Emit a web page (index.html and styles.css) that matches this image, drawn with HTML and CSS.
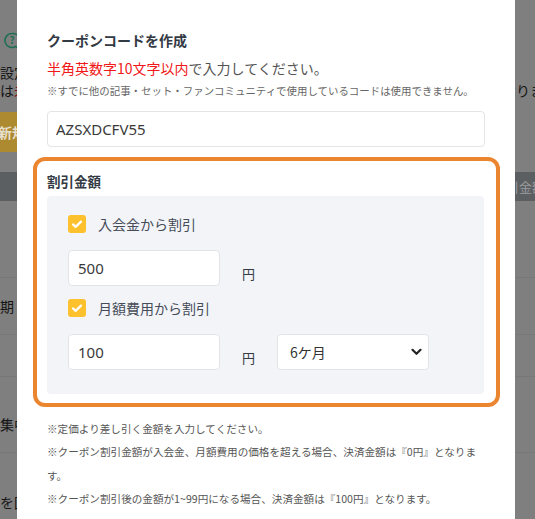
FILE: index.html
```html
<!DOCTYPE html>
<html lang="ja">
  <head>
    <meta charset="UTF-8" />
    <meta name="viewport" content="width=device-width, initial-scale=1.0" />
    <title>クーポンコードを作成</title>
    <link rel="stylesheet" href="styles.css">
  </head>

  <body>
    <!-- 背景のページ（モーダル表示中は暗くなる） -->
    <div class="page">
      <div class="pageHead">
        <svg class="helpIcon" width="18" height="19" viewBox="0 0 18 19">
          <path d="M9 1.5a7 7 0 1 0 3.6 13l3.6 2-1.1-3.6A7 7 0 0 0 9 1.5z" fill="none" stroke="#1f6f55" stroke-width="1.6" stroke-linejoin="round" />
          <text x="9" y="12.2" text-anchor="middle" font-size="10" font-weight="bold" fill="#1f6f55">?</text>
        </svg>
      </div>
      <p class="pageText">設定方法</p>
      <p class="pageText">
        <span class="pageLead">は<span class="warn">未</span>設定の場合は</span><span>なります</span>
      </p>
      <div class="pageActions">
        <button class="addBtn">新規作成</button>
      </div>
      <div class="tableHead"><span class="headCell">割引金額</span></div>
      <div class="tableRow rowA"></div>
      <div class="tableRow rowB"><span>期</span></div>
      <div class="tableRow rowC"></div>
      <div class="tableRow rowD"><span>集中</span></div>
      <div class="tableRow rowE"><span>を回</span></div>
    </div>

    <!-- クーポン作成モーダル -->
    <div class="modal">
      <h2 class="modalTitle">クーポンコードを作成</h2>
      <p class="lead"><span class="red">半角英数字10文字以内</span>で入力してください。</p>
      <p class="hint">※すでに他の記事・セット・ファンコミュニティで使用しているコードは使用できません。</p>
      <input class="codeInput" value="AZSXDCFV55" />

      <div class="discount">
        <h3 class="discountTitle">割引金額</h3>
        <div class="discountPanel">
          <label class="check">
            <span class="checkBox">
              <svg width="18" height="18" viewBox="0 0 18 18"><path d="M5 9.4l2.6 2.5L13 6.6" fill="none" stroke="#fff" stroke-width="2.2" stroke-linecap="round" stroke-linejoin="round" /></svg>
            </span>
            入会金から割引
          </label>
          <div class="amountRow">
            <input class="amountInput" value="500" />
            <span class="yen">円</span>
          </div>

          <label class="check">
            <span class="checkBox">
              <svg width="18" height="18" viewBox="0 0 18 18"><path d="M5 9.4l2.6 2.5L13 6.6" fill="none" stroke="#fff" stroke-width="2.2" stroke-linecap="round" stroke-linejoin="round" /></svg>
            </span>
            月額費用から割引
          </label>
          <div class="amountRow">
            <input class="amountInput" value="100" />
            <span class="yen">円</span>
            <div class="monthSelect">
              <span>6ケ月</span>
              <svg width="11" height="8" viewBox="0 0 11 8"><path d="M1.5 1.8l4 4 4-4" fill="none" stroke="#222" stroke-width="2.2" stroke-linecap="round" stroke-linejoin="round" /></svg>
            </div>
          </div>
        </div>
      </div>

      <div class="notes">
        <p>※定価より差し引く金額を入力してください。</p>
        <p>※クーポン割引金額が入会金、月額費用の価格を超える場合、決済金額は『0円』となります。</p>
        <p>※クーポン割引後の金額が1~99円になる場合、決済金額は『100円』となります。</p>
      </div>
    </div>
  </body>
</html>
```

FILE: styles.css
```css
body {
  margin: 0;
  padding: 0;
  width: 535px;
  height: 519px;
  overflow: hidden;
  position: relative;
  font-family: "Noto Sans CJK JP", "Noto Sans", sans-serif;
}

p,
h2,
h3 {
  margin: 0;
}

/* 背景ページ */
.page {
  background: #7f7f7f;
  height: 519px;
  padding-top: 32px;
  box-sizing: border-box;
  color: #151515;
  font-size: 14px;
}

.pageHead {
  height: 19px;
  padding-left: 3px;
}

.pageText {
  line-height: 18px;
  white-space: nowrap;
  display: flex;
}

.pageHead + .pageText {
  margin-top: 12px;
}

.pageLead {
  width: 502px;
  flex-shrink: 0;
}

.warn {
  color: #8a0f0f;
}

.pageActions {
  margin-top: 13px;
}

.addBtn {
  height: 40px;
  width: 96px;
  margin-left: -20px;
  border: none;
  background: #ad8a30;
  color: #e6dfcd;
  font-family: inherit;
  font-size: 14px;
  font-weight: bold;
  padding: 0 0 0 18px;
  text-align: left;
}

.tableHead {
  margin-top: 20px;
  height: 29px;
  background: #5c5f62;
  color: #9a9c9e;
  font-size: 13px;
  display: flex;
  align-items: center;
}

.headCell {
  margin-left: 493px;
  white-space: nowrap;
}

.tableRow {
  border-bottom: 1px solid #777;
  display: flex;
  align-items: center;
  white-space: nowrap;
}

.rowA {
  height: 76px;
}

.rowB {
  height: 56px;
}

.rowC {
  height: 41px;
}

.rowD {
  height: 75px;
  align-items: flex-end;
}

.rowD span {
  margin-bottom: 18px;
}

.rowE {
  height: 66px;
  border-bottom: none;
  align-items: flex-start;
}

.rowE span {
  margin-top: 39px;
}

/* モーダル */
.modal {
  position: absolute;
  left: 17px;
  top: 0;
  width: 498px;
  height: 519px;
  box-sizing: border-box;
  background: #fff;
  padding: 30px 30px 0;
  color: #333a44;
}

.modalTitle {
  font-size: 14px;
  font-weight: bold;
  line-height: 20px;
}

.lead {
  margin-top: 8px;
  font-size: 14px;
  line-height: 20px;
  color: #555;
}

.red {
  color: #f01818;
}

.hint {
  margin-top: 5px;
  font-size: 10.45px;
  line-height: 16px;
  color: #666;
  white-space: nowrap;
}

.codeInput {
  display: block;
  margin-top: 12px;
  width: 438px;
  height: 36px;
  box-sizing: border-box;
  border: 1px solid #e2e4e7;
  border-radius: 4px;
  padding: 0 8px;
  font-family: "Noto Sans", sans-serif;
  font-size: 15px;
  color: #3a3a3a;
  outline: none;
}

.discount {
  margin: 10px -15px 0 -14px;
  border: 4px solid #eb8530;
  border-radius: 12px;
  padding: 10px 12px 9px 10px;
}

.discountTitle {
  font-size: 13.5px;
  font-weight: bold;
  line-height: 20px;
}

.discountPanel {
  margin-top: 5px;
  background: #f3f4f8;
  border-radius: 4px;
  padding: 18px 21px 24px;
}

.check {
  display: flex;
  align-items: center;
  height: 20px;
  font-size: 14px;
  color: #464d58;
}

.checkBox {
  width: 18px;
  height: 18px;
  border-radius: 3px;
  background: #fcc12d;
  margin-right: 12px;
  display: flex;
}

.amountRow {
  display: flex;
  align-items: flex-end;
  margin-top: 16px;
  margin-bottom: 12px;
}

.amountRow:last-child {
  margin-bottom: 0;
}

.amountInput {
  width: 152px;
  height: 36px;
  box-sizing: border-box;
  border: 1px solid #e2e4e7;
  border-radius: 4px;
  padding: 0 9px;
  font-family: "Noto Sans", sans-serif;
  font-size: 15px;
  color: #3a3a3a;
  outline: none;
}

.yen {
  margin-left: 22px;
  font-size: 13px;
  line-height: 20px;
  margin-bottom: 2px;
}

.monthSelect {
  margin-left: 22px;
  width: 152px;
  height: 36px;
  box-sizing: border-box;
  border: 1px solid #e2e4e7;
  border-radius: 4px;
  background: #fff;
  padding: 0 6px 0 12px;
  display: flex;
  align-items: center;
  justify-content: space-between;
  font-size: 14px;
  color: #333;
}

.notes {
  margin-top: 10px;
  font-size: 10.6px;
  line-height: 23.4px;
  color: #555;
  width: 430px;
}
```
